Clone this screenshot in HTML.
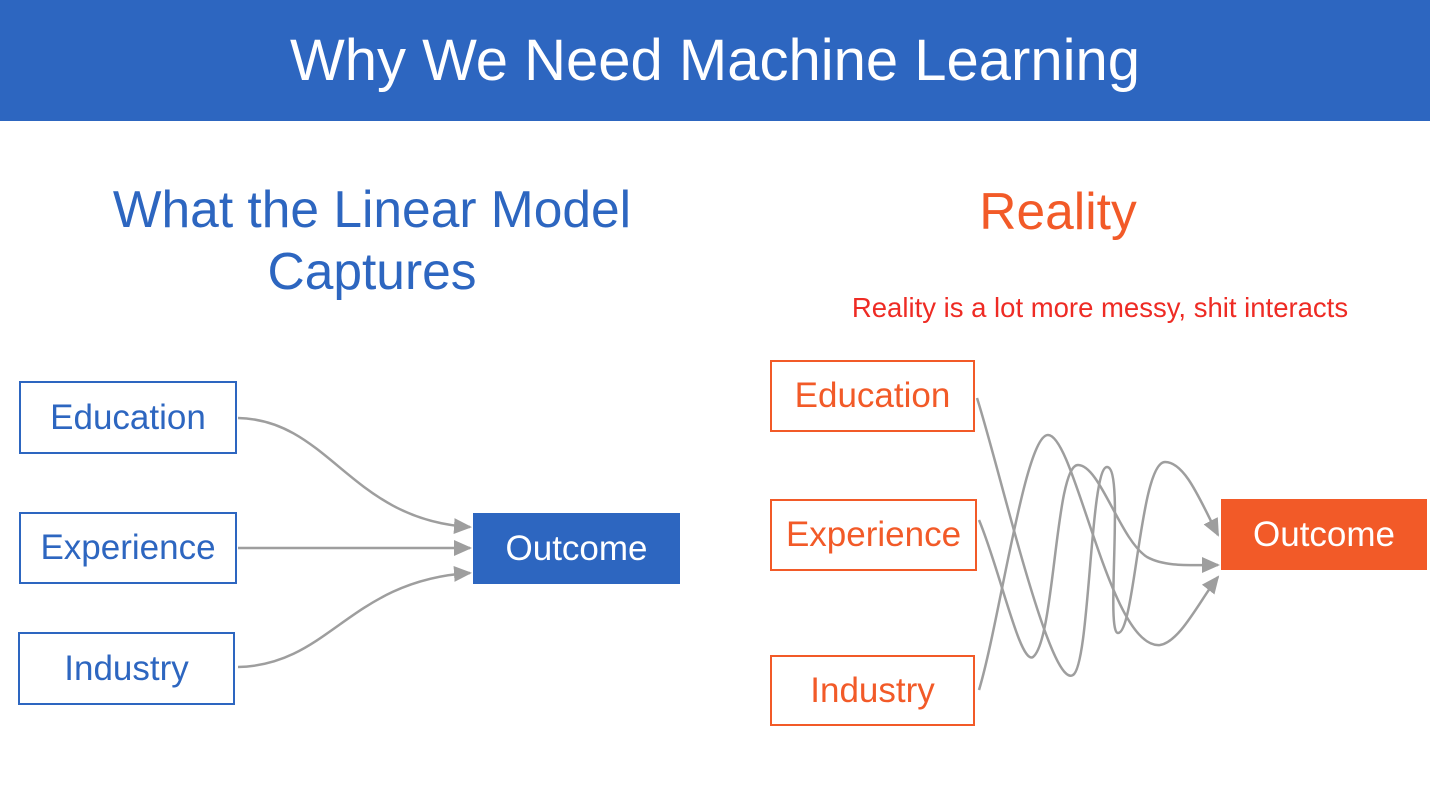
<!DOCTYPE html>
<html><head><style>
body{margin:0;width:1430px;height:796px;background:#fff;position:relative;overflow:hidden;font-family:"Liberation Sans",sans-serif}
.bar{position:absolute;left:0;top:0;width:1430px;height:121px;background:#2d66c0;color:#fff;font-size:58px;text-align:center;line-height:121px}
.t{position:absolute;text-align:center;white-space:nowrap}
.b{position:absolute;box-sizing:border-box;border:2px solid #2d66c0;color:#2d66c0;font-size:35px;display:flex;align-items:center;justify-content:center}
.o{border-color:#f25a28;color:#f25a28}
svg{position:absolute;left:0;top:0}
</style></head><body>
<div class="bar">Why We Need Machine Learning</div>
<div class="t" style="left:72px;width:600px;top:178px;font-size:51.5px;line-height:62px;color:#2d66c0">What the Linear Model<br>Captures</div>
<div class="t" style="left:858px;width:400px;top:180px;font-size:51.5px;line-height:62px;color:#f25a28">Reality</div>
<div class="t" style="left:800px;width:600px;top:292px;font-size:27.5px;color:#ee2b24">Reality is a lot more messy, shit interacts</div>
<div class="b" style="left:19px;top:381px;width:218px;height:73px">Education</div>
<div class="b" style="left:19px;top:512px;width:218px;height:72px">Experience</div>
<div class="b" style="left:18px;top:632px;width:217px;height:73px">Industry</div>
<div class="b" style="left:473px;top:513px;width:207px;height:71px;background:#2d66c0;color:#fff">Outcome</div>
<div class="b o" style="left:770px;top:360px;width:205px;height:72px">Education</div>
<div class="b o" style="left:770px;top:499px;width:207px;height:72px">Experience</div>
<div class="b o" style="left:770px;top:655px;width:205px;height:71px">Industry</div>
<div class="b o" style="left:1221px;top:499px;width:206px;height:71px;background:#f25a28;color:#fff">Outcome</div>
<svg width="1430" height="796">
<defs><marker id="a" markerWidth="18" markerHeight="16" refX="16" refY="8" orient="auto" markerUnits="userSpaceOnUse" viewBox="0 0 18 16"><path d="M0,0L18,8L0,16z" fill="#9e9e9e"/></marker></defs>
<g fill="none" stroke="#9e9e9e" stroke-width="2.5" marker-end="url(#a)">
<path d="M238,418C330,420 350,520 470,527"/>
<path d="M238,548L470,548"/>
<path d="M238,667C330,665 350,580 470,573"/>
<path d="M977,398C1000,470 1050,690 1073,675C1090,665 1090,467 1107,467C1125,467 1105,633 1118,633C1135,633 1140,462 1165,462C1185,462 1200,500 1218,535"/>
<path d="M979,520C1000,570 1020,665 1033,657C1055,640 1055,465 1078,465C1100,465 1120,540 1147,557C1165,567 1190,565 1218,565"/>
<path d="M979,690C1000,620 1025,435 1048,435C1075,435 1110,650 1160,645C1180,642 1200,600 1218,577"/>
</g></svg>
</body></html>
